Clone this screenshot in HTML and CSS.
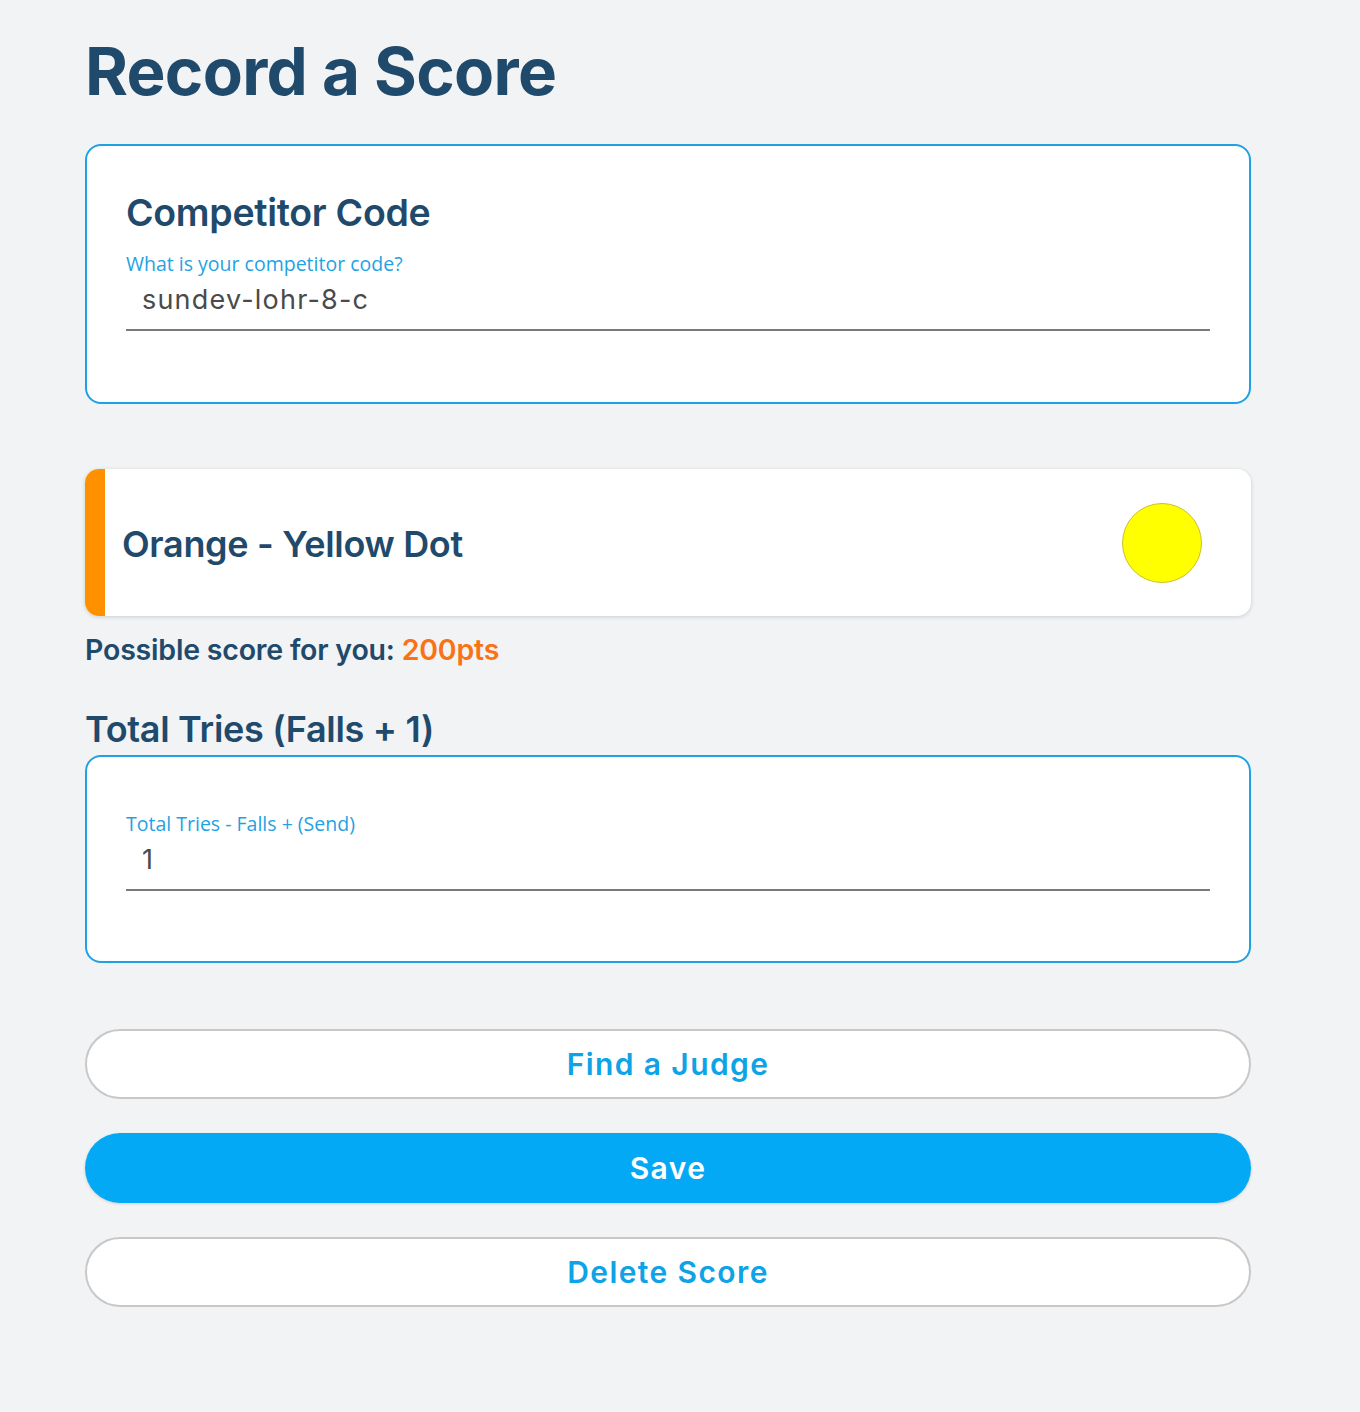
FILE: index.html
```html
<!DOCTYPE html>
<html lang="en">
<head>
<meta charset="utf-8">
<title>Record a Score</title>
<link rel="stylesheet" href="styles.css">
</head>
<body>
<main class="page">
  <h1 class="title">Record a Score</h1>

  <section class="card card-outline">
    <h2 class="card-heading">Competitor Code</h2>
    <div class="field">
      <label class="field-label">What is your competitor code?</label>
      <div class="field-value">sundev-lohr-8-c</div>
    </div>
  </section>

  <section class="route">
    <div class="route-bar"></div>
    <div class="route-name">Orange - Yellow Dot</div>
    <div class="route-dot"></div>
  </section>

  <p class="possible">Possible score for you: <span class="pts">200pts</span></p>

  <h2 class="section-heading">Total Tries (Falls + 1)</h2>
  <section class="card card-outline card-tries">
    <div class="field">
      <label class="field-label">Total Tries - Falls + (Send)</label>
      <div class="field-value">1</div>
    </div>
  </section>

  <div class="actions">
    <button class="btn btn-outline">Find a Judge</button>
    <button class="btn btn-primary">Save</button>
    <button class="btn btn-outline">Delete Score</button>
  </div>
</main>
</body>
</html>
```
FILE: styles.css
```css
* { box-sizing: border-box; }
html, body { margin: 0; padding: 0; }
body {
  background: #f2f3f5;
  font-family: Inter, "Noto Sans", sans-serif;
  color: #1f4a6b;
  width: 1360px;
  min-height: 1412px;
}
.page {
  width: 1166px;
  margin-left: 85px;
  padding-top: 32px;
}
.title {
  margin: 0;
  font-size: 65.5px;
  line-height: 80px;
  font-weight: 700;
  letter-spacing: -0.7px;
  color: #1f4a6b;
}
.card {
  background: #fff;
  border-radius: 16px;
}
.card-outline {
  border: 2px solid #1fa2e3;
  margin-top: 32px;
  padding: 44px 39px 71px 39px;
}
.card-heading {
  margin: 0;
  font-size: 37.5px;
  line-height: 46px;
  font-weight: 600;
  letter-spacing: -0.3px;
}
.field { margin-top: 15px; }
.field-label {
  display: block;
  font-family: "Open Sans", sans-serif;
  font-size: 19.5px;
  line-height: 26px;
  color: #1fa2e3;
}
.field-value {
  font-family: Inter, sans-serif;
  font-size: 27px;
  line-height: 34px;
  padding: 6px 16px 12px 16px;
  color: #4a4a4a;
  border-bottom: 2px solid #7b7b7b;
  letter-spacing: 1.2px;
}
.card-tries {
  margin-top: 4px;
  padding-top: 54px;
  padding-bottom: 70px;
}
.card-tries .field { margin-top: 0; }

.route {
  margin-top: 65px;
  height: 147px;
  background: #fff;
  border-radius: 14px;
  box-shadow: 0 1px 4px rgba(0,0,0,0.16);
  display: flex;
  align-items: center;
  overflow: hidden;
}
.route-bar {
  width: 20px;
  align-self: stretch;
  background: #ff9100;
}
.route-name {
  flex: 1;
  padding-left: 17px;
  padding-top: 3px;
  font-size: 36px;
  font-weight: 600;
  letter-spacing: -0.3px;
  color: #1f4a6b;
}
.route-dot {
  width: 80px;
  height: 80px;
  border-radius: 50%;
  background: #ffff00;
  border: 1.5px solid #c9c02c;
  margin-right: 49px;
}
.possible {
  margin: 17px 0 0 0;
  font-size: 28.5px;
  line-height: 34px;
  font-weight: 600;
  letter-spacing: -0.2px;
}
.pts { color: #f97316; }
.section-heading {
  margin: 40px 0 0 0;
  font-size: 36px;
  line-height: 44px;
  font-weight: 600;
  letter-spacing: -0.3px;
}
.actions {
  margin-top: 66px;
  display: flex;
  flex-direction: column;
  gap: 34px;
}
.btn {
  height: 70px;
  border-radius: 35px;
  font-family: Inter, sans-serif;
  font-size: 30px;
  font-weight: 600;
  letter-spacing: 1.4px;
  cursor: pointer;
}
.btn-outline {
  background: #fff;
  border: 2px solid #c8c8c8;
  color: #0ea2e6;
}
.btn-primary {
  background: #03a9f4;
  border: none;
  color: #fff;
  box-shadow: 0 1px 3px rgba(0,0,0,0.15);
}
```
